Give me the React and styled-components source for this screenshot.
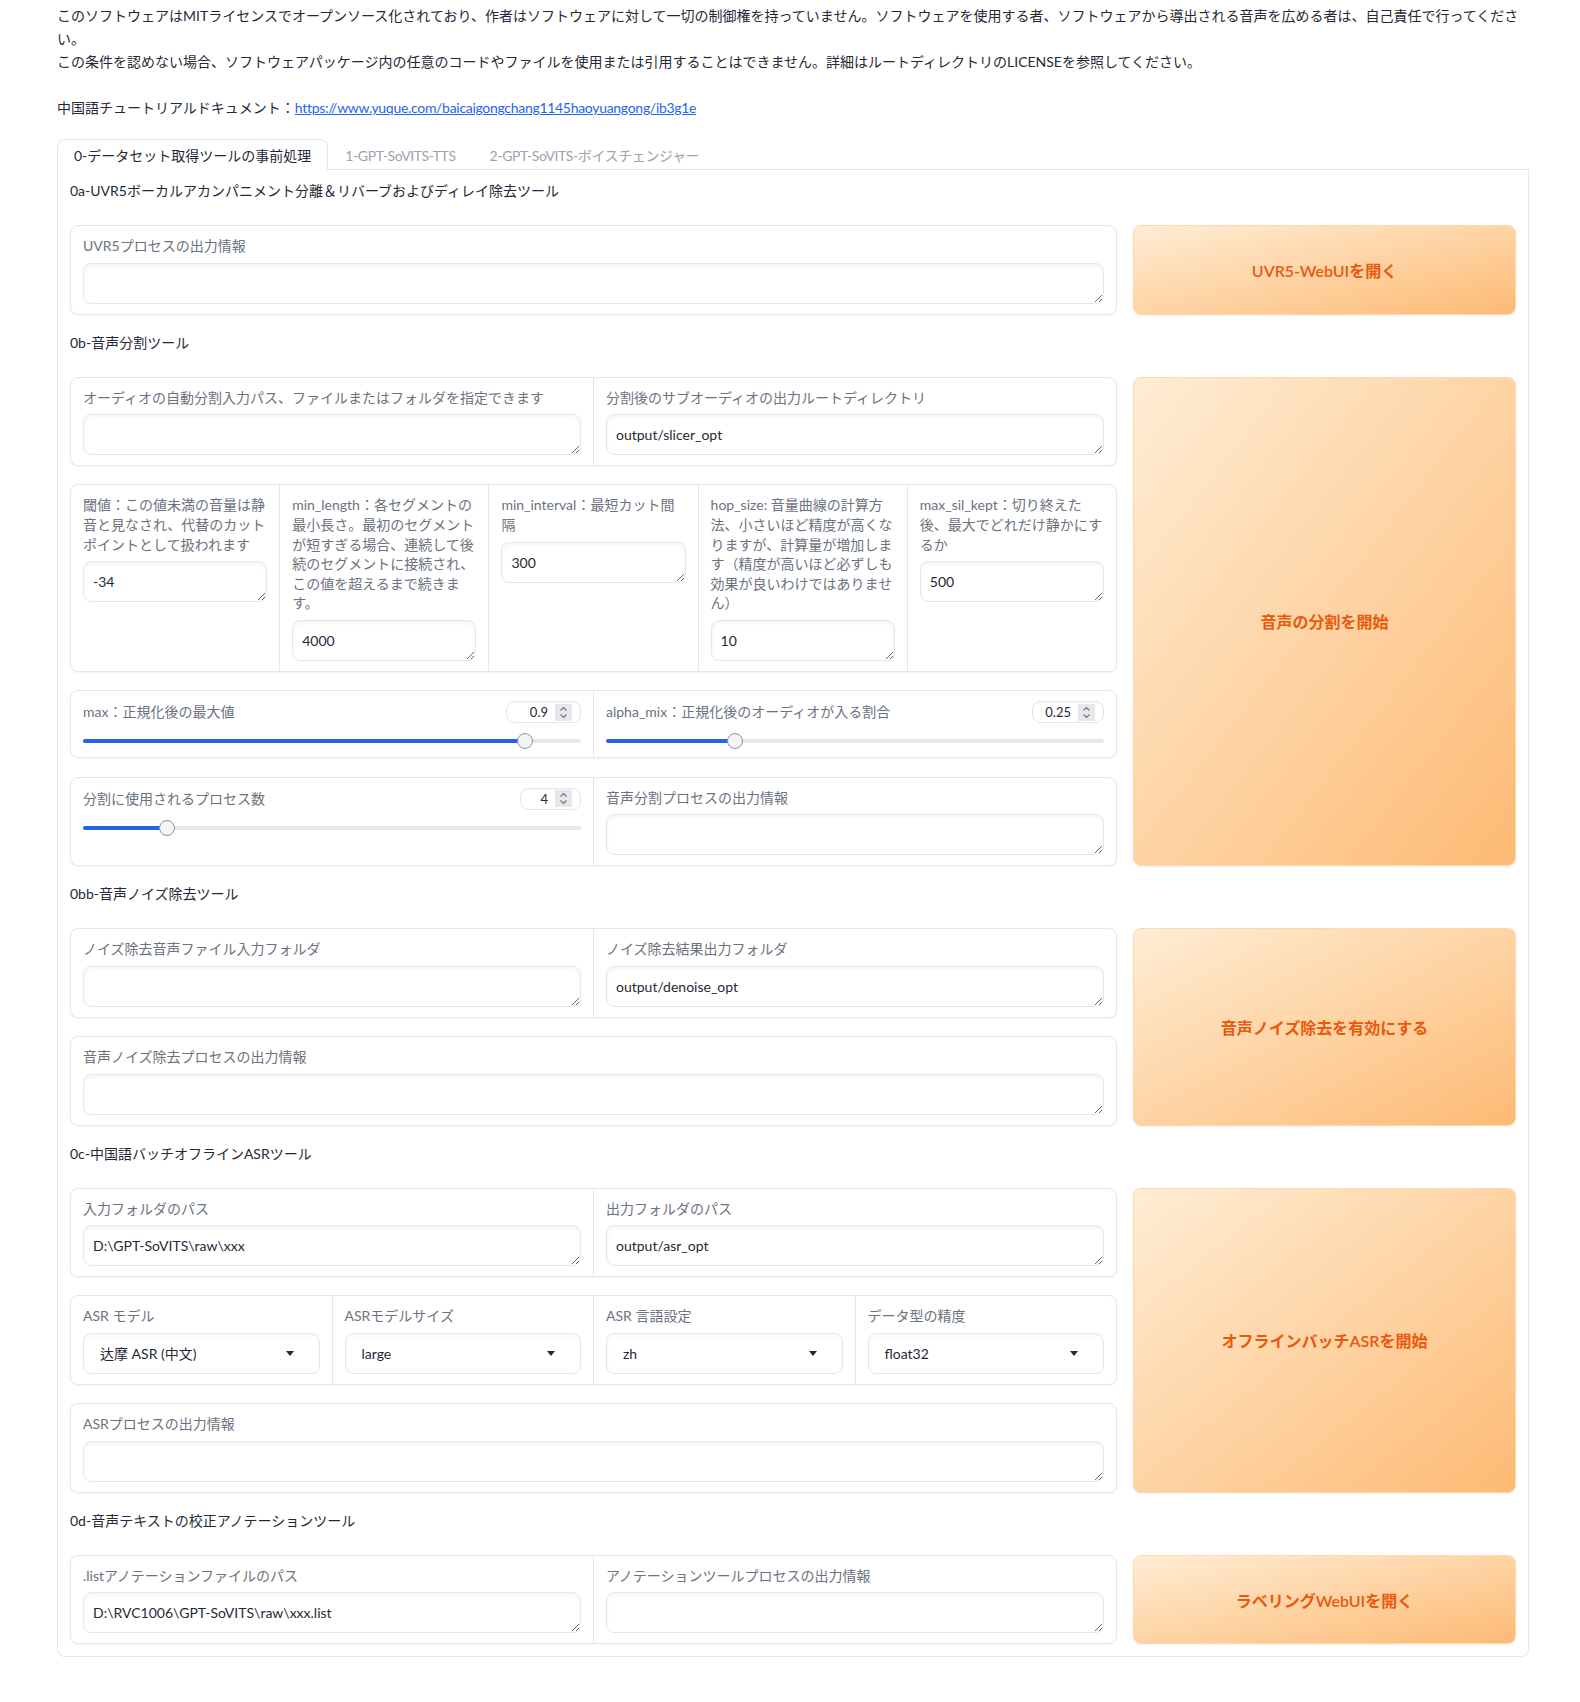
import React from "react";
import styled, { createGlobalStyle } from "styled-components";

const GlobalStyle = createGlobalStyle`
  html, body {
    margin: 0;
    padding: 0;
    background: #ffffff;
  }
  body {
    font-family: Lato, "Noto Sans CJK JP", "Noto Sans CJK SC", sans-serif;
    font-size: 14px;
    color: #1f2937;
  }
  * { box-sizing: border-box; }
`;

const Page = styled.div`
  width: 1529px;
  padding: 4px 0 44px 57px;
`;

const Intro = styled.p`
  margin: 0 0 23px;
  font-size: 14px;
  line-height: 23px;
  color: #1f2937;
`;

const LinkLine = styled.p`
  margin: 0 0 20px;
  font-size: 14px;
  line-height: 23px;
  color: #1f2937;
`;

const Link = styled.a`
  color: #2563eb;
  text-decoration: underline;
  letter-spacing: -0.3px;
`;

const TabNav = styled.div`
  display: flex;
  border-bottom: 1px solid #e5e7eb;
`;

const Tab = styled.div`
  padding: 6px 16px 3px;
  line-height: 20px;
  font-size: 14px;
  border: 1px solid ${(p) => (p.$active ? "#e5e7eb" : "transparent")};
  border-bottom: none;
  border-radius: 8px 8px 0 0;
  background: ${(p) => (p.$active ? "#ffffff" : "transparent")};
  margin-bottom: ${(p) => (p.$active ? "-1px" : "0")};
  color: ${(p) => (p.$active ? "#1f2937" : "#9ca3af")};
  letter-spacing: ${(p) => (p.$active ? "0" : "-0.4px")};
`;

const Panel = styled.div`
  border: 1px solid #e5e7eb;
  border-top: none;
  border-radius: 0 0 8px 8px;
  padding: 11px 12px 12px;
  display: flex;
  flex-direction: column;
`;

const SectionTitle = styled.div`
  line-height: 20px;
  font-size: 14px;
  color: #1f2937;
  margin: ${(p) => (p.$first ? "0" : "18px")} 0 24px;
`;

const Row = styled.div`
  display: flex;
  gap: 16px;
  align-items: stretch;
`;

const Column = styled.div`
  flex: 1;
  min-width: 0;
  display: flex;
  flex-direction: column;
  gap: 18.25px;
`;

const Form = styled.div`
  display: grid;
  grid-template-columns: repeat(${(p) => p.$cols || 1}, minmax(0, 1fr));
  gap: 1px;
  background: #e5e7eb;
  border: 1px solid #e5e7eb;
  border-radius: 8px;
  overflow: hidden;
  box-shadow: 0 1px 2px rgba(0, 0, 0, 0.05);
`;

const Cell = styled.div`
  background: #ffffff;
  padding: ${(p) => (p.$slider ? "10px 12px 8px" : "10px 12px")};
  min-width: 0;
`;

const FieldLabel = styled.span`
  display: block;
  font-size: 14px;
  line-height: 1.4;
  color: #6b7280;
  margin-bottom: 7px;
`;

const TextArea = styled.textarea`
  display: block;
  width: 100%;
  height: 41px;
  padding: 9px 9px;
  border: 1px solid #e5e7eb;
  border-radius: 8px;
  box-shadow: inset 0 2px 4px rgba(0, 0, 0, 0.05);
  font-family: Lato, "Noto Sans CJK JP", sans-serif;
  font-size: 14px;
  line-height: 21px;
  color: #1f2937;
  background: #ffffff;
  resize: vertical;
  outline: none;
  overflow: hidden;
`;

const SliderHead = styled.div`
  display: flex;
  align-items: center;
  justify-content: space-between;
  height: 22px;
`;

const SliderLabel = styled.span`
  font-size: 14px;
  line-height: 1.4;
  color: #6b7280;
`;

const NumberBox = styled.div`
  width: ${(p) => p.$w}px;
  height: 22px;
  border: 1px solid #e5e7eb;
  border-radius: 8px;
  display: flex;
  align-items: center;
  justify-content: flex-end;
  gap: 7px;
  padding: 0 8px 0 6px;
  box-shadow: inset 0 1px 2px rgba(0, 0, 0, 0.04);
`;

const NumberValue = styled.span`
  font-size: 13px;
  color: #1f2937;
`;

const Spinner = styled.span`
  width: 17px;
  height: 17px;
  background: #e5e7eb;
  display: flex;
  align-items: center;
  justify-content: center;
`;

const TrackArea = styled.div`
  padding: 6px 0;
  margin-top: 10px;
`;

const Rail = styled.div`
  position: relative;
  height: 4px;
  border-radius: 2px;
  background: #e5e7eb;
`;

const RailFill = styled.div`
  height: 100%;
  border-radius: 2px;
  background: #2563eb;
`;

const Thumb = styled.span`
  position: absolute;
  top: -6px;
  width: 16px;
  height: 16px;
  border-radius: 50%;
  background: #f3f4f6;
  border: 1px solid #8f949c;
`;

const SelectBox = styled.div`
  height: 41px;
  border: 1px solid #e5e7eb;
  border-radius: 8px;
  box-shadow: inset 0 2px 4px rgba(0, 0, 0, 0.04);
  display: flex;
  align-items: center;
  justify-content: space-between;
  padding: 0 25px 0 16px;
  font-size: 14px;
  color: #1f2937;
`;

const ActionButton = styled.button`
  width: 383px;
  flex: none;
  border: 1px solid #fed7aa;
  border-radius: 8px;
  background: linear-gradient(to bottom right, #ffedd5, #fdba74);
  color: #ea580c;
  font-family: Lato, "Noto Sans CJK JP", sans-serif;
  font-size: 16px;
  font-weight: 600;
  box-shadow: 0 1px 2px rgba(0, 0, 0, 0.05);
  cursor: pointer;
`;

const SpinIcon = () => (
  <svg width="9" height="13" viewBox="0 0 9 13" fill="none">
    <path d="M1.5 4.5 L4.5 1.5 L7.5 4.5" stroke="#6b7280" strokeWidth="1.1" />
    <path d="M1.5 8.5 L4.5 11.5 L7.5 8.5" stroke="#6b7280" strokeWidth="1.1" />
  </svg>
);

const Caret = () => (
  <svg width="8" height="5" viewBox="0 0 8 5">
    <path d="M0 0 H8 L4 5 Z" fill="#1f2937" />
  </svg>
);

const Textbox = ({ label, value = "", lines }) => (
  <Cell>
    <FieldLabel>
      {lines
        ? lines.map((l, i) => (
            <React.Fragment key={i}>
              {i > 0 && <br />}
              {l}
            </React.Fragment>
          ))
        : label}
    </FieldLabel>
    <TextArea rows={1} defaultValue={value} spellCheck={false} />
  </Cell>
);

const Slider = ({ label, value, min, max, w }) => {
  const frac = (parseFloat(value) - min) / (max - min);
  return (
    <Cell $slider>
      <SliderHead>
        <SliderLabel>{label}</SliderLabel>
        <NumberBox $w={w}>
          <NumberValue>{value}</NumberValue>
          <Spinner>
            <SpinIcon />
          </Spinner>
        </NumberBox>
      </SliderHead>
      <TrackArea>
        <Rail>
          <RailFill style={{ width: `calc(8px + ${frac} * (100% - 16px))` }} />
          <Thumb style={{ left: `calc(${frac} * (100% - 16px))` }} />
        </Rail>
      </TrackArea>
    </Cell>
  );
};

const Dropdown = ({ label, value }) => (
  <Cell>
    <FieldLabel>{label}</FieldLabel>
    <SelectBox>
      <span>{value}</span>
      <Caret />
    </SelectBox>
  </Cell>
);

const slicerParams = [
  {
    lines: ["閾値：この値未満の音量は静", "音と見なされ、代替のカット", "ポイントとして扱われます"],
    value: "-34",
  },
  {
    lines: [
      "min_length：各セグメントの",
      "最小長さ。最初のセグメント",
      "が短すぎる場合、連続して後",
      "続のセグメントに接続され、",
      "この値を超えるまで続きま",
      "す。",
    ],
    value: "4000",
  },
  { lines: ["min_interval：最短カット間", "隔"], value: "300" },
  {
    lines: [
      "hop_size: 音量曲線の計算方",
      "法、小さいほど精度が高くな",
      "りますが、計算量が増加しま",
      "す（精度が高いほど必ずしも",
      "効果が良いわけではありませ",
      "ん）",
    ],
    value: "10",
  },
  { lines: ["max_sil_kept：切り終えた", "後、最大でどれだけ静かにす", "るか"], value: "500" },
];

export default function App() {
  return (
    <>
      <GlobalStyle />
      <Page>
        <Intro>
          このソフトウェアはMITライセンスでオープンソース化されており、作者はソフトウェアに対して一切の制御権を持っていません。ソフトウェアを使用する者、ソフトウェアから導出される音声を広める者は、自己責任で行ってください。
          <br />
          この条件を認めない場合、ソフトウェアパッケージ内の任意のコードやファイルを使用または引用することはできません。詳細はルートディレクトリのLICENSEを参照してください。
        </Intro>
        <LinkLine>
          中国語チュートリアルドキュメント：
          <Link href="#">https://www.yuque.com/baicaigongchang1145haoyuangong/ib3g1e</Link>
        </LinkLine>

        <TabNav>
          <Tab $active>0-データセット取得ツールの事前処理</Tab>
          <Tab>1-GPT-SoVITS-TTS</Tab>
          <Tab>2-GPT-SoVITS-ボイスチェンジャー</Tab>
        </TabNav>

        <Panel>
          <SectionTitle $first>0a-UVR5ボーカルアカンパニメント分離＆リバーブおよびディレイ除去ツール</SectionTitle>
          <Row>
            <Column>
              <Form>
                <Textbox label="UVR5プロセスの出力情報" />
              </Form>
            </Column>
            <ActionButton>UVR5-WebUIを開く</ActionButton>
          </Row>

          <SectionTitle>0b-音声分割ツール</SectionTitle>
          <Row>
            <Column>
              <Form $cols={2}>
                <Textbox label="オーディオの自動分割入力パス、ファイルまたはフォルダを指定できます" />
                <Textbox label="分割後のサブオーディオの出力ルートディレクトリ" value="output/slicer_opt" />
              </Form>
              <Form $cols={5}>
                {slicerParams.map((p, i) => (
                  <Textbox key={i} lines={p.lines} value={p.value} />
                ))}
              </Form>
              <Form $cols={2}>
                <Slider label="max：正規化後の最大値" value="0.9" min={0} max={1} w={75} />
                <Slider label="alpha_mix：正規化後のオーディオが入る割合" value="0.25" min={0} max={1} w={72} />
              </Form>
              <Form $cols={2}>
                <Slider label="分割に使用されるプロセス数" value="4" min={1} max={20} w={61} />
                <Textbox label="音声分割プロセスの出力情報" />
              </Form>
            </Column>
            <ActionButton>音声の分割を開始</ActionButton>
          </Row>

          <SectionTitle>0bb-音声ノイズ除去ツール</SectionTitle>
          <Row>
            <Column>
              <Form $cols={2}>
                <Textbox label="ノイズ除去音声ファイル入力フォルダ" />
                <Textbox label="ノイズ除去結果出力フォルダ" value="output/denoise_opt" />
              </Form>
              <Form>
                <Textbox label="音声ノイズ除去プロセスの出力情報" />
              </Form>
            </Column>
            <ActionButton>音声ノイズ除去を有効にする</ActionButton>
          </Row>

          <SectionTitle>0c-中国語バッチオフラインASRツール</SectionTitle>
          <Row>
            <Column>
              <Form $cols={2}>
                <Textbox label="入力フォルダのパス" value={"D:\\GPT-SoVITS\\raw\\xxx"} />
                <Textbox label="出力フォルダのパス" value="output/asr_opt" />
              </Form>
              <Form $cols={4}>
                <Dropdown label="ASR モデル" value="达摩 ASR (中文)" />
                <Dropdown label="ASRモデルサイズ" value="large" />
                <Dropdown label="ASR 言語設定" value="zh" />
                <Dropdown label="データ型の精度" value="float32" />
              </Form>
              <Form>
                <Textbox label="ASRプロセスの出力情報" />
              </Form>
            </Column>
            <ActionButton>オフラインバッチASRを開始</ActionButton>
          </Row>

          <SectionTitle>0d-音声テキストの校正アノテーションツール</SectionTitle>
          <Row>
            <Column>
              <Form $cols={2}>
                <Textbox label=".listアノテーションファイルのパス" value={"D:\\RVC1006\\GPT-SoVITS\\raw\\xxx.list"} />
                <Textbox label="アノテーションツールプロセスの出力情報" />
              </Form>
            </Column>
            <ActionButton>ラベリングWebUIを開く</ActionButton>
          </Row>
        </Panel>
      </Page>
    </>
  );
}
